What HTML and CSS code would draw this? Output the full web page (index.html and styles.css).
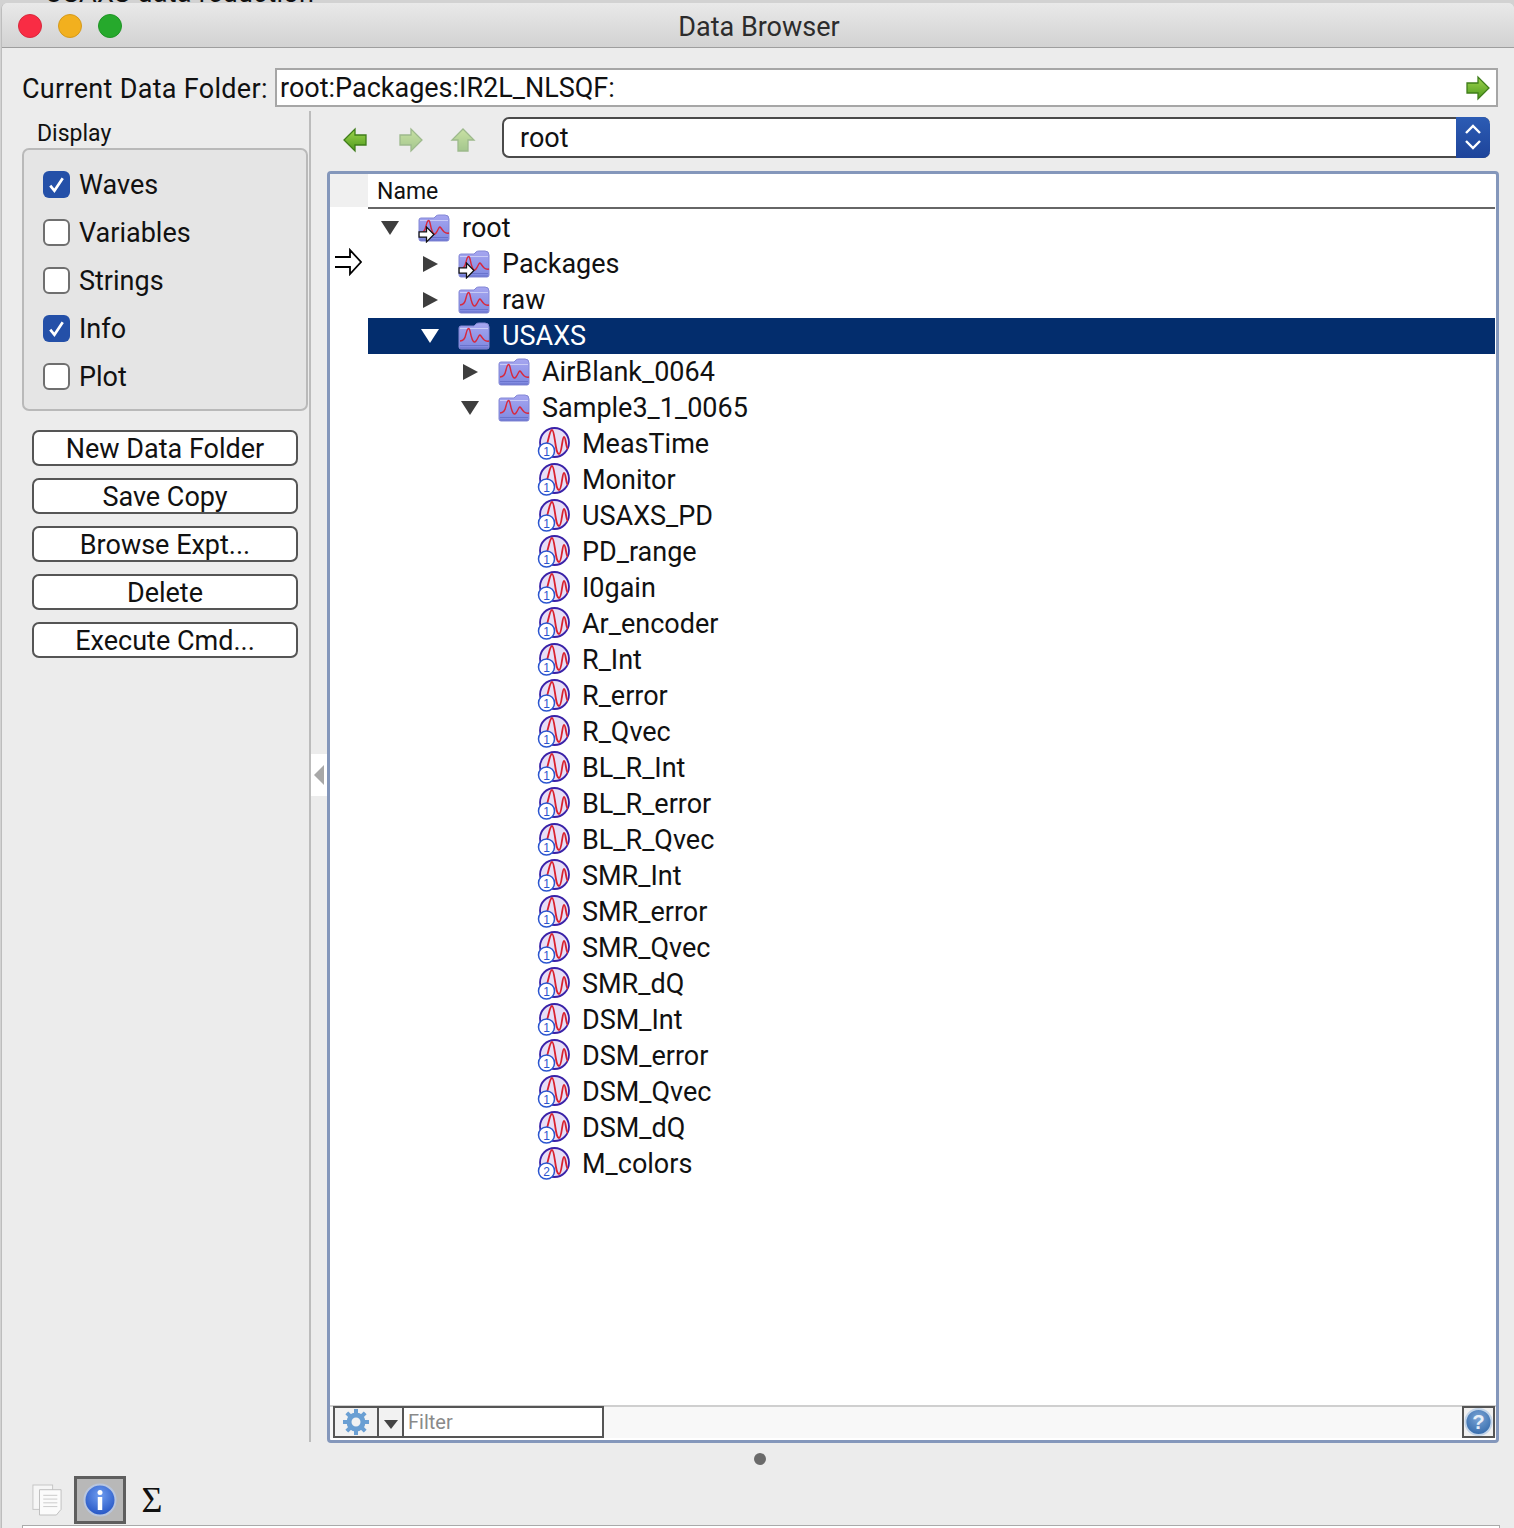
FILE: index.html
```html
<!DOCTYPE html>
<html lang="en">
<head>
    <meta charset="UTF-8">
    <title>Data Browser</title>
    <link rel="stylesheet" href="styles.css">
</head>
<body>

    <svg class="defs" width="0" height="0">
        <defs>
            <linearGradient id="folder-fill" x1="0" y1="0" x2="0" y2="1">
                <stop offset="0" stop-color="#a6a6f0"/>
                <stop offset="1" stop-color="#7f89e0"/>
            </linearGradient>
            <linearGradient id="green-fill" x1="0" y1="0" x2="0" y2="1">
                <stop offset="0" stop-color="#9fd44e"/>
                <stop offset="1" stop-color="#4d9a1c"/>
            </linearGradient>
            <radialGradient id="info-fill" cx="0.5" cy="0.35" r="0.7">
                <stop offset="0" stop-color="#6f9df0"/>
                <stop offset="1" stop-color="#1f4fc0"/>
            </radialGradient>
            <radialGradient id="help-fill" cx="0.5" cy="0.35" r="0.7">
                <stop offset="0" stop-color="#7ba5d6"/>
                <stop offset="1" stop-color="#2f66a8"/>
            </radialGradient>
            <symbol id="folder" viewBox="0 0 32 28">
                <path d="M1 6q0-2 2-2h13l2-2q1-1 3-1h6q4 0 4 4v20q0 2-2 2H3q-2 0-2-2z" fill="url(#folder-fill)" stroke="#8488d6" stroke-width="1"/>
                <path d="M2 6.500h28" stroke="#c9cbf6" stroke-width="1"/>
                <path d="M2 23.500h28M2 26h28" stroke="#4f5ab8" stroke-width="1" opacity=".5"/>
                <path d="M2 19c3 0 5-2 6-7s3-8 4-3 3 14 6 10 3-8 5-5 4 6 8 5" fill="none" stroke="#d8283c" stroke-width="1.400"/>
            </symbol>
            <symbol id="wave-1" viewBox="0 0 34 34">
                <circle cx="17.500" cy="15.500" r="14.500" fill="#e7def6" stroke="#3a22a8" stroke-width="1.800"/>
                <path d="M8 20C11 20 12 3 15 3 18 3 18 27 22 27 25 27 25 10 27 10 29 10 29 22 31 22" fill="none" stroke="#d8202e" stroke-width="1.800"/>
                <circle cx="9.500" cy="24" r="8" fill="#fff" stroke="#2a55cf" stroke-width="1.500"/>
                <text x="9.500" y="28.500" class="wave-num">1</text>
            </symbol>
            <symbol id="wave-2" viewBox="0 0 34 34">
                <circle cx="17.500" cy="15.500" r="14.500" fill="#e7def6" stroke="#3a22a8" stroke-width="1.800"/>
                <path d="M8 20C11 20 12 3 15 3 18 3 18 27 22 27 25 27 25 10 27 10 29 10 29 22 31 22" fill="none" stroke="#d8202e" stroke-width="1.800"/>
                <circle cx="9.500" cy="24" r="8" fill="#fff" stroke="#2a55cf" stroke-width="1.500"/>
                <text x="9.500" y="28.500" class="wave-num">2</text>
            </symbol>
            <symbol id="tiny-arrow" viewBox="0 0 16 16">
                <path d="M1 5.500h7V1l7 7-7 7v-4.500H1z" fill="#fff" stroke="#111" stroke-width="1.200"/>
            </symbol>
        </defs>
    </svg>

    <div class="backdrop"><span>USAXS data reduction</span></div>

    <div class="window">
        <div class="titlebar">
            <div class="lights">
                <span class="light red"></span>
                <span class="light yellow"></span>
                <span class="light green"></span>
            </div>
            <div class="title">Data Browser</div>
        </div>

        <div class="folder-row">
            <label class="folder-label">Current Data Folder:</label>
            <div class="folder-input">
                <span>root:Packages:IR2L_NLSQF:</span>
                <svg class="go-arrow" viewBox="0 0 26 26" width="26" height="26">
                    <path d="M2 8h11V2l11 11-11 11v-6H2z" fill="url(#green-fill)" stroke="#3f7d1a" stroke-width="1.300"/>
                </svg>
            </div>
        </div>

        <div class="main">
            <div class="side">
                <div class="display-label">Display</div>
                <div class="display-box">
                    <div class="check-row"><span class="check on"><svg viewBox="0 0 26 26"><path d="M7 14l4 5 8-12" fill="none" stroke="#fff" stroke-width="2.600"/></svg></span>Waves</div>
                    <div class="check-row"><span class="check"></span>Variables</div>
                    <div class="check-row"><span class="check"></span>Strings</div>
                    <div class="check-row"><span class="check on"><svg viewBox="0 0 26 26"><path d="M7 14l4 5 8-12" fill="none" stroke="#fff" stroke-width="2.600"/></svg></span>Info</div>
                    <div class="check-row"><span class="check"></span>Plot</div>
                </div>
                <div class="buttons">
                    <button class="btn">New Data Folder</button>
                    <button class="btn">Save Copy</button>
                    <button class="btn">Browse Expt...</button>
                    <button class="btn">Delete</button>
                    <button class="btn">Execute Cmd...</button>
                </div>
            </div>

            <div class="content">
                <div class="collapse-handle"><span class="collapse-tri"></span></div>

                <div class="nav-row">
                    <div class="nav-arrows">
                        <svg viewBox="0 0 26 26" width="26" height="26"><path d="M24 8H13V2L2 13l11 11v-6h11z" fill="url(#green-fill)" stroke="#3f7d1a" stroke-width="1.300"/></svg>
                        <svg class="faded forward" viewBox="0 0 26 26" width="26" height="26"><path d="M2 8h11V2l11 11-11 11v-6H2z" fill="url(#green-fill)" stroke="#3f7d1a" stroke-width="1.300"/></svg>
                        <svg class="faded" viewBox="0 0 26 26" width="26" height="26"><path d="M8 24V13H2L13 2l11 11h-6v11z" fill="url(#green-fill)" stroke="#3f7d1a" stroke-width="1.300"/></svg>
                    </div>
                    <div class="combo">
                        <span class="combo-text">root</span>
                        <span class="combo-btn">
                            <svg viewBox="0 0 34 40" width="34" height="40"><path d="M10 16l7-7 7 7M10 24l7 7 7-7" fill="none" stroke="#fff" stroke-width="2.400"/></svg>
                        </span>
                    </div>
                </div>

                <div class="tree">
                    <div class="tree-head">
                        <div class="head-gutter"></div>
                        <div class="head-name">Name</div>
                    </div>
                    <div class="tree-body">
                        <div class="row d0">
                            <span class="tri open"></span>
                            <span class="icon-wrap">
                                <svg class="folder"><use href="#folder"/></svg>
                                <svg class="mini-arrow"><use href="#tiny-arrow"/></svg>
                            </span>
                            root
                        </div>
                        <div class="row d1">
                            <svg class="cur-marker" viewBox="0 0 28 28"><path d="M1 9h15V2l11 12-11 12v-7H1" fill="#fff" stroke="#000" stroke-width="1.800"/></svg>
                            <span class="tri closed"></span>
                            <span class="icon-wrap">
                                <svg class="folder"><use href="#folder"/></svg>
                                <svg class="mini-arrow"><use href="#tiny-arrow"/></svg>
                            </span>
                            Packages
                        </div>
                        <div class="row d1">
                            <span class="tri closed"></span>
                            <span class="icon-wrap"><svg class="folder"><use href="#folder"/></svg></span>
                            raw
                        </div>
                        <div class="row d1 selected">
                            <span class="tri open"></span>
                            <span class="icon-wrap"><svg class="folder"><use href="#folder"/></svg></span>
                            USAXS
                        </div>
                        <div class="row d2">
                            <span class="tri closed"></span>
                            <span class="icon-wrap"><svg class="folder"><use href="#folder"/></svg></span>
                            AirBlank_0064
                        </div>
                        <div class="row d2">
                            <span class="tri open"></span>
                            <span class="icon-wrap"><svg class="folder"><use href="#folder"/></svg></span>
                            Sample3_1_0065
                        </div>
                        <div class="row d3"><svg class="wave"><use href="#wave-1"/></svg>MeasTime</div>
                        <div class="row d3"><svg class="wave"><use href="#wave-1"/></svg>Monitor</div>
                        <div class="row d3"><svg class="wave"><use href="#wave-1"/></svg>USAXS_PD</div>
                        <div class="row d3"><svg class="wave"><use href="#wave-1"/></svg>PD_range</div>
                        <div class="row d3"><svg class="wave"><use href="#wave-1"/></svg>I0gain</div>
                        <div class="row d3"><svg class="wave"><use href="#wave-1"/></svg>Ar_encoder</div>
                        <div class="row d3"><svg class="wave"><use href="#wave-1"/></svg>R_Int</div>
                        <div class="row d3"><svg class="wave"><use href="#wave-1"/></svg>R_error</div>
                        <div class="row d3"><svg class="wave"><use href="#wave-1"/></svg>R_Qvec</div>
                        <div class="row d3"><svg class="wave"><use href="#wave-1"/></svg>BL_R_Int</div>
                        <div class="row d3"><svg class="wave"><use href="#wave-1"/></svg>BL_R_error</div>
                        <div class="row d3"><svg class="wave"><use href="#wave-1"/></svg>BL_R_Qvec</div>
                        <div class="row d3"><svg class="wave"><use href="#wave-1"/></svg>SMR_Int</div>
                        <div class="row d3"><svg class="wave"><use href="#wave-1"/></svg>SMR_error</div>
                        <div class="row d3"><svg class="wave"><use href="#wave-1"/></svg>SMR_Qvec</div>
                        <div class="row d3"><svg class="wave"><use href="#wave-1"/></svg>SMR_dQ</div>
                        <div class="row d3"><svg class="wave"><use href="#wave-1"/></svg>DSM_Int</div>
                        <div class="row d3"><svg class="wave"><use href="#wave-1"/></svg>DSM_error</div>
                        <div class="row d3"><svg class="wave"><use href="#wave-1"/></svg>DSM_Qvec</div>
                        <div class="row d3"><svg class="wave"><use href="#wave-1"/></svg>DSM_dQ</div>
                        <div class="row d3"><svg class="wave"><use href="#wave-2"/></svg>M_colors</div>
                    </div>
                    <div class="tree-foot">
                        <div class="gear-btn">
                            <svg viewBox="0 0 28 28" width="28" height="28">
                                <g fill="none" stroke="#6a9fd3">
                                    <circle cx="14" cy="14" r="7" stroke-width="5"/>
                                    <path d="M14 1v6M14 21v6M1 14h6M21 14h6M4.800 4.800l4.200 4.200M19 19l4.200 4.200M4.800 23.200L9 19M19 9l4.200-4.200" stroke-width="4"/>
                                </g>
                            </svg>
                        </div>
                        <div class="menu-btn"><span class="menu-tri"></span></div>
                        <div class="filter">Filter</div>
                        <div class="foot-fill"></div>
                        <div class="help-btn">
                            <svg viewBox="0 0 30 30" width="30" height="30">
                                <circle cx="15" cy="15" r="13.500" fill="url(#help-fill)" stroke="#c3d5ea" stroke-width="2"/>
                                <text x="15" y="22" class="help-mark">?</text>
                            </svg>
                        </div>
                    </div>
                </div>
            </div>
        </div>

        <div class="dot-row"><span class="dot"></span></div>

        <div class="tabs">
            <div class="tab doc">
                <svg viewBox="0 0 32 34" width="30" height="32">
                    <rect x="1" y="1" width="21" height="26" fill="#f6f6f6" stroke="#c4c4c4"/>
                    <path d="M8 6h23v21l-5 6H8z" fill="#fbfbfb" stroke="#bdbdbd"/>
                    <path d="M12 12h15M12 16h15M12 20h15M12 24h15" stroke="#c9c9c9"/>
                </svg>
            </div>
            <div class="tab active">
                <svg viewBox="0 0 34 34" width="34" height="34">
                    <circle cx="17" cy="17" r="15.500" fill="url(#info-fill)" stroke="#b9c6de" stroke-width="2"/>
                    <circle cx="17" cy="9.500" r="2.500" fill="#fff"/>
                    <path d="M17 14v13" stroke="#fff" stroke-width="4.500"/>
                </svg>
            </div>
            <div class="tab sigma">Σ</div>
        </div>
        <div class="bottom-panel"></div>
    </div>

</body>
</html>
```

FILE: styles.css
```css
html, body {
    margin: 0;
    height: 1528px;
    overflow: hidden;
}
body {
    background-color: #d2d2d2;
    font-family: Roboto, "Liberation Sans", Arial, sans-serif;
    color: #111;
}
.defs {
    display: block;
    height: 0;
}
.wave-num {
    font-family: "Liberation Sans", Arial, sans-serif;
    font-size: 12px;
    fill: #2a55cf;
    text-anchor: middle;
}
.help-mark {
    font-family: "Liberation Sans", Arial, sans-serif;
    font-size: 21px;
    font-weight: bold;
    fill: #e6eef8;
    text-anchor: middle;
}

/* window behind */
.backdrop {
    height: 3px;
    overflow: hidden;
    padding-left: 45px;
    font-size: 27px;
    letter-spacing: 0.25px;
    line-height: 30px;
}
.backdrop span {
    display: block;
    margin-top: -22px;
}

.window {
    margin-left: 1px;
    background-color: #ececec;
    border-left: 1px solid #bdbdbd;
    border-radius: 6px 6px 0 0;
    height: 1525px;
    overflow: hidden;
}

/* title bar */
.titlebar {
    position: relative;
    display: flex;
    align-items: center;
    justify-content: center;
    height: 44px;
    background: linear-gradient(#e9e9e9, #d2d2d2);
    border-bottom: 1px solid #9e9e9e;
}
.lights {
    position: absolute;
    left: 16px;
    top: 11px;
    display: flex;
    gap: 16px;
}
.light {
    width: 24px;
    height: 24px;
    border-radius: 50%;
    box-sizing: border-box;
}
.red { background: #f92c44; border: 1px solid #d8283c; }
.yellow { background: #f2b01e; border: 1px solid #d59a1b; }
.green { background: #26a92c; border: 1px solid #1f9425; }
.title {
    font-size: 27px;
    color: #2c2c2c;
    margin-left: 2px;
    padding-top: 3px;
}

/* current data folder */
.folder-row {
    display: flex;
    align-items: center;
    padding: 20px 16px 0 20px;
}
.folder-label {
    flex: none;
    width: 253px;
    font-size: 27px;
    letter-spacing: 0.3px;
    white-space: nowrap;
    padding-top: 2px;
}
.folder-input {
    flex: 1;
    display: flex;
    align-items: center;
    justify-content: space-between;
    height: 39px;
    box-sizing: border-box;
    background: white;
    border: 2px solid #a6a6a6;
    padding: 0 5px 0 3px;
    font-size: 27px;
}

.main {
    display: flex;
    height: 1335px;
    margin-top: 4px;
}

/* left side */
.side {
    flex: none;
    width: 286px;
    padding: 9px 0 0 20px;
}
.display-label {
    font-size: 23px;
    line-height: 28px;
    padding-left: 15px;
}
.display-box {
    box-sizing: border-box;
    height: 263px;
    background: #e5e5e5;
    border: 2px solid #b9b9b9;
    border-radius: 7px;
    padding-top: 11px;
}
.check-row {
    display: flex;
    align-items: center;
    gap: 9px;
    height: 48px;
    padding-left: 19px;
    font-size: 27px;
}
.check {
    width: 27px;
    height: 27px;
    margin-top: -2px;
    box-sizing: border-box;
    background: white;
    border: 2px solid #6f6f6f;
    border-radius: 6px;
}
.check.on {
    background: #2450a8;
    border: none;
}
.check svg {
    display: block;
}
.buttons {
    display: flex;
    flex-direction: column;
    gap: 12px;
    padding: 19px 10px 0 10px;
}
.btn {
    height: 36px;
    padding: 1px 0 0;
    background: white;
    border: 2px solid #555;
    border-radius: 7px;
    font-family: inherit;
    font-size: 27px;
    color: #111;
}

/* right side */
.content {
    position: relative;
    flex: 1;
    border-left: 2px solid #bcbcbc;
    padding-left: 16px;
    padding-right: 15px;
    box-sizing: border-box;
    height: 1331px;
    margin-left: 1px;
}
.collapse-handle {
    position: absolute;
    left: 0;
    top: 643px;
    width: 16px;
    height: 42px;
    background: white;
    display: flex;
    align-items: center;
    justify-content: center;
}
.collapse-tri {
    width: 0;
    height: 0;
    border-top: 10px solid transparent;
    border-bottom: 10px solid transparent;
    border-right: 10px solid #a8a8a8;
}
.nav-row {
    display: flex;
    align-items: center;
    height: 40px;
    margin-top: 6px;
}
.nav-arrows {
    display: flex;
    gap: 28px;
    padding-left: 15px;
    margin-top: 6px;
    width: 161px;
    box-sizing: border-box;
    flex: none;
}
.faded {
    opacity: 0.45;
}
.forward {
    margin-left: 2px;
    margin-right: -2px;
}
.combo {
    flex: 1;
    display: flex;
    height: 41px;
    box-sizing: border-box;
    background: white;
    border: 2px solid #4a4a4a;
    border-right: none;
    border-radius: 7px;
    margin-right: 9px;
    margin-left: 14px;
}
.combo-text {
    flex: 1;
    font-size: 27px;
    line-height: 39px;
    padding-left: 16px;
}
.combo-btn {
    width: 34px;
    margin: -2px 0;
    background: linear-gradient(#2c5cb4, #1e449a);
    border-radius: 0 7px 7px 0;
}
.combo-btn svg {
    display: block;
}

/* tree */
.tree {
    display: flex;
    flex-direction: column;
    height: 1272px;
    margin-top: 14px;
    box-sizing: border-box;
    background: white;
    border: 3px solid #8497bb;
    border-radius: 4px;
}
.tree-head {
    display: flex;
    height: 33px;
    flex: none;
    padding-right: 1px;
}
.head-gutter {
    width: 38px;
    background: #f0f0f0;
}
.head-name {
    flex: 1;
    border-bottom: 2px solid #666;
    font-size: 23px;
    line-height: 36px;
    padding-left: 9px;
    margin-bottom: -2px;
}
.tree-body {
    flex: 1;
    padding: 3px 1px 0 38px;
}
.row {
    position: relative;
    display: flex;
    align-items: center;
    height: 36px;
    font-size: 27px;
    white-space: nowrap;
}
.row.d0 { padding-left: 13px; }
.row.d1 { padding-left: 53px; }
.row.d2 { padding-left: 93px; }
.row.d3 { padding-left: 170px; }
.row.selected {
    background: #032d6d;
    color: white;
}
.tri {
    flex: none;
    width: 37px;
    height: 0;
}
.tri.open {
    width: 0;
    margin-right: 19px;
    border-left: 9px solid transparent;
    border-right: 9px solid transparent;
    border-top: 14px solid #3e3e3e;
}
.tri.closed {
    width: 0;
    margin-left: 2px;
    margin-right: 20px;
    border-top: 8px solid transparent;
    border-bottom: 8px solid transparent;
    border-left: 15px solid #3e3e3e;
}
.selected .tri.open {
    border-top-color: white;
}
.icon-wrap {
    position: relative;
    display: block;
    flex: none;
    width: 32px;
    height: 28px;
    margin-right: 12px;
}
.folder {
    display: block;
    width: 32px;
    height: 28px;
}
.mini-arrow {
    position: absolute;
    left: 0;
    top: 12px;
    width: 17px;
    height: 17px;
}
.cur-marker {
    position: absolute;
    left: -34px;
    top: 2px;
    width: 28px;
    height: 28px;
}
.wave {
    flex: none;
    width: 34px;
    height: 34px;
    margin-left: -1px;
    margin-right: 11px;
}

/* tree footer */
.tree-foot {
    display: flex;
    flex: none;
    height: 33px;
    background: #f8f8f8;
    border-top: 2px solid #cfcfcf;
    box-sizing: border-box;
    margin-bottom: 2px;
    padding: 0 1px 0 3px;
}
.gear-btn, .menu-btn, .help-btn {
    display: flex;
    align-items: center;
    justify-content: center;
    box-sizing: border-box;
    background: #f2f2f2;
    border: 2px solid #555;
}
.gear-btn {
    width: 46px;
    margin-top: -1px;
}
.menu-btn {
    width: 25px;
    margin-top: -1px;
    border-left: none;
    padding-top: 4px;
}
.menu-tri {
    width: 0;
    height: 0;
    border-left: 7px solid transparent;
    border-right: 7px solid transparent;
    border-top: 9px solid #444;
}
.filter {
    width: 200px;
    margin-top: -1px;
    box-sizing: border-box;
    background: white;
    border: 2px solid #555;
    border-left: none;
    padding-left: 4px;
    font-size: 20px;
    line-height: 28px;
    color: #8a8a8a;
}
.foot-fill {
    flex: 1;
}
.help-btn {
    width: 33px;
    margin-top: -1px;
    background: #f0f0f0;
}

/* bottom */
.dot-row {
    display: flex;
    justify-content: center;
    padding: 7px 0 0 4px;
    height: 29px;
    box-sizing: border-box;
}
.dot {
    width: 12px;
    height: 12px;
    border-radius: 50%;
    background: #6a6a6a;
}
.tabs {
    display: flex;
    align-items: center;
    height: 50px;
    padding-left: 30px;
}
.tab {
    display: flex;
    align-items: center;
    justify-content: center;
    height: 48px;
}
.tab.doc {
    width: 42px;
    justify-content: flex-start;
}
.tab.active {
    width: 52px;
    box-sizing: border-box;
    background: #b8b8b8;
    border: 3px solid #5e5e5e;
}
.sigma {
    font-family: "Liberation Serif", serif;
    font-size: 36px;
    width: 52px;
}
.bottom-panel {
    height: 10px;
    margin: 0 14px 0 20px;
    background: white;
    border: 1px solid #aaa;
}
```
